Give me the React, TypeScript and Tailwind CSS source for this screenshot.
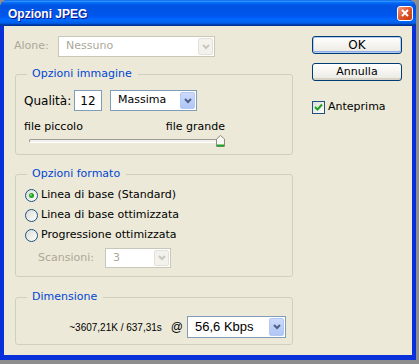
import React from 'react';
import clsx from 'clsx';

const Chevron: React.FC<{ disabled?: boolean }> = ({ disabled }) => (
  <svg width="8" height="6" viewBox="0 0 8 6">
    <polyline
      points="1,1 4,4 7,1"
      fill="none"
      stroke={disabled ? '#C9C7BA' : '#4D6185'}
      strokeWidth="2"
    />
  </svg>
);

interface ComboProps {
  value: string;
  disabled?: boolean;
  className?: string;
  textClass?: string;
}

const Combo: React.FC<ComboProps> = ({ value, disabled, className, textClass }) => (
  <div
    className={clsx(
      'flex items-stretch border bg-white',
      disabled ? 'border-[#C9C7BA]' : 'border-[#7F9DB9]',
      className
    )}
  >
    <div
      className={clsx(
        'flex-1 flex items-center pl-[7px] whitespace-nowrap',
        disabled ? 'text-[#ACA899]' : 'text-black',
        textClass
      )}
    >
      {value}
    </div>
    <div
      className={clsx(
        'w-[15px] m-[1px] rounded-[2px] border flex items-center justify-center',
        disabled
          ? 'border-[#E4E2D8] bg-[#F3F2EC]'
          : 'border-[#B4C8F4] bg-linear-to-b from-[#CCDAFD] to-[#B0C6F6]'
      )}
    >
      <Chevron disabled={disabled} />
    </div>
  </div>
);

const Button: React.FC<{ label: string; isDefault?: boolean }> = ({ label, isDefault }) => (
  <div
    className={clsx(
      'w-[90px] h-[18px] rounded-[3px] border border-[#003C74] bg-linear-to-b from-white to-[#EAE8E0] flex items-center justify-center',
      isDefault
        ? 'text-[12px] shadow-[inset_0_0_0_1px_#B4CBF0,inset_0_-1px_0_1px_#8FAEE6]'
        : 'text-[11px] shadow-[inset_0_-2px_0_#D8D3C6]'
    )}
  >
    {label}
  </div>
);

const Radio: React.FC<{ checked?: boolean; label: string }> = ({ checked, label }) => (
  <div className="flex items-center h-[20px]">
    <svg width="13" height="13" viewBox="0 0 13 13">
      <defs>
        <linearGradient id="rbg" x1="0" y1="0" x2="1" y2="1">
          <stop offset="0" stopColor="#DCDBD3" />
          <stop offset="1" stopColor="#FFFFFF" />
        </linearGradient>
      </defs>
      <circle cx="6.5" cy="6.5" r="6" fill="url(#rbg)" stroke="#1C5180" strokeWidth="1" />
      {checked && <circle cx="6.5" cy="6.5" r="2.5" fill="#21A121" />}
      {checked && <circle cx="6" cy="6" r="1" fill="#7BE07B" />}
    </svg>
    <span className="ml-[3px]">{label}</span>
  </div>
);

const Group: React.FC<{ legend: string; className?: string; children: React.ReactNode }> = ({
  legend,
  className,
  children,
}) => (
  <div className={clsx('relative ml-[1px] w-[278px] border border-[#D0D0BF] rounded-[3px]', className)}>
    <span className="absolute left-[11px] -top-[8px] pl-[5px] pr-[6px] leading-[14px] bg-[#ECE9D8] text-[#0046D5]">
      {legend}
    </span>
    {children}
  </div>
);

export default function App() {
  return (
    <div className="w-[419px] h-[364px] bg-[#8E8E8E] font-['DejaVu_Sans',sans-serif] text-[11px] text-black">
      <div className="w-[416px] h-[360px] rounded-t-[8px] bg-[#0831D9] flex flex-col overflow-hidden">
        {/* title bar */}
        <div className="h-[26px] flex items-center pl-[8px] pr-[3px] bg-[linear-gradient(to_bottom,#0058ee_0%,#3593ff_4%,#288eff_6%,#127dff_8%,#036ffc_10%,#0262ee_14%,#0057e5_20%,#0054e3_24%,#0055eb_56%,#005bf5_66%,#026afe_76%,#0062ef_86%,#0052d6_92%,#0040ab_94%,#003092_100%)]">
          <span className="flex-1 pt-[2px] font-['Liberation_Sans',sans-serif] font-bold text-[12px] text-white [text-shadow:1px_1px_#0F1089]">
            Opzioni JPEG
          </span>
          <div className="w-[16px] h-[15px] rounded-[3px] border border-white bg-linear-to-br from-[#F09A7E] via-[#E0542A] to-[#C43A10] flex items-center justify-center">
            <svg width="8" height="8" viewBox="0 0 8 8">
              <path d="M1 1 L7 7 M7 1 L1 7" stroke="white" strokeWidth="2" />
            </svg>
          </div>
        </div>

        {/* body */}
        <div className="flex-1 mx-[4px] mb-[5px] bg-[#ECE9D8] flex pt-[10px]">
          <div className="w-[289px] pl-[10px] flex flex-col">
            <div className="flex items-center h-[21px]">
              <span className="w-[44px] text-[#ACA899]">Alone:</span>
              <Combo value="Nessuno" disabled className="w-[157px] h-[21px]" />
            </div>

            <Group legend="Opzioni immagine" className="mt-[17px] h-[81px]">
              <div className="pt-[15px] pl-[8px]">
                <div className="flex items-center h-[21px]">
                  <span className="w-[50px] text-[12px]">Qualità:</span>
                  <div className="w-[28px] h-[21px] border border-[#7F9DB9] bg-white flex items-center justify-center text-[12px]">
                    12
                  </div>
                  <Combo value="Massima" className="ml-[8px] w-[87px] h-[21px]" />
                </div>
                <div className="mt-[9px] w-[201px] flex justify-between leading-[13px]">
                  <span>file piccolo</span>
                  <span>file grande</span>
                </div>
                <div className="mt-[2px] ml-[5px] w-[196px] h-[12px] flex items-center">
                  <div className="flex-1 h-[4px] rounded-[2px] border border-[#9D9C99] border-b-white border-r-white bg-[#F2F1EB]" />
                  <svg width="9" height="12" viewBox="0 0 9 12" className="-ml-[5px]">
                    <path d="M0.5 4 L4.5 0.5 L8.5 4 L8.5 11.5 L0.5 11.5 Z" fill="#F7F7F4" stroke="#8B8B85" />
                    <rect x="1" y="9.5" width="7" height="2" fill="#21A121" />
                  </svg>
                </div>
              </div>
            </Group>

            <Group legend="Opzioni formato" className="mt-[19px] h-[103px]">
              <div className="pt-[10px] pl-[9px]">
                <Radio checked label="Linea di base (Standard)" />
                <Radio label="Linea di base ottimizzata" />
                <Radio label="Progressione ottimizzata" />
                <div className="mt-[3px] h-[20px] pl-[13px] flex items-center">
                  <span className="w-[67px] text-[#ACA899]">Scansioni:</span>
                  <Combo value="3" disabled className="w-[66px] h-[20px]" />
                </div>
              </div>
            </Group>

            <Group legend="Dimensione" className="mt-[20px] h-[48px]">
              <div className="pt-[18px] pr-[6px] flex justify-end items-center">
                <span className="font-['Liberation_Sans',sans-serif] text-[10px]">~3607,21K / 637,31s</span>
                <span className="ml-[9px] font-['Liberation_Sans',sans-serif] text-[12px]">@</span>
                <Combo
                  value="56,6 Kbps"
                  className="ml-[4px] w-[99px] h-[22px]"
                  textClass="pl-[3px] font-['Liberation_Sans',sans-serif] text-[13px]"
                />
              </div>
            </Group>
          </div>

          <div className="ml-[19px] flex flex-col">
            <Button label="OK" isDefault />
            <div className="mt-[9px]">
              <Button label="Annulla" />
            </div>
            <div className="mt-[18px] flex items-center">
              <svg width="13" height="13" viewBox="0 0 13 13">
                <defs>
                  <linearGradient id="cbg" x1="0" y1="0" x2="1" y2="1">
                    <stop offset="0" stopColor="#DCDBD3" />
                    <stop offset="1" stopColor="#FFFFFF" />
                  </linearGradient>
                </defs>
                <rect x="0.5" y="0.5" width="12" height="12" fill="url(#cbg)" stroke="#1C5180" />
                <polyline points="3,6 5.5,8.5 10,3.5" fill="none" stroke="#21A121" strokeWidth="2" />
              </svg>
              <span className="ml-[3px] text-[11px]">Anteprima</span>
            </div>
          </div>
        </div>
      </div>
    </div>
  );
}
